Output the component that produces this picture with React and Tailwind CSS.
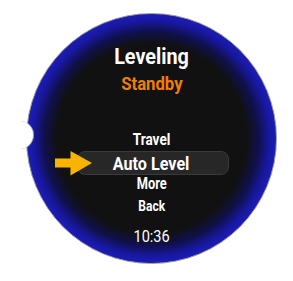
import React from 'react';

function Arrow() {
  return (
    <svg width="38" height="25" viewBox="0 0 38 25" className="absolute left-[-23px] top-[-1px]">
      <path d="M0 7.5 H15.5 V0 L37 12 L15.5 24.5 V16.5 H0 Z" fill="#f8b400" />
    </svg>
  );
}

export default function App() {
  return (
    <div className="w-[293px] h-[281px] bg-white pt-[13px] pl-[26px]" style={{ fontFamily: 'Roboto, "Liberation Sans", sans-serif' }}>
      <div className="relative w-[251px] h-[251px] rounded-full border-[1.5px] border-[#9c9c9c] bg-[image:radial-gradient(circle_closest-side,#111111_0%,#111111_76%,#10104c_86%,#1818a4_95%,#1c1cb4_100%)] flex flex-col items-center text-white">
        {/* notch on left edge */}
        <div className="absolute left-[-8px] top-[107px] w-[15px] h-[28px] rounded-r-full bg-white border-r-[1.5px] border-[#9c9c9c]"></div>

        <div className="mt-[32px] text-[22px] font-bold leading-none scale-x-[0.9]">Leveling</div>
        <div className="mt-[6px] text-[19px] font-bold leading-none text-[#f07f00] scale-x-[0.88]">Standby</div>

        <div className="mt-[38px] text-[17px] font-bold leading-none scale-x-[0.8]">Travel</div>
        <div className="relative mt-[3px] ml-[3px] w-[152px] h-[24px] rounded-[8px] bg-[#272727] border border-[#3a3a3a] flex items-center justify-center">
          <Arrow />
          <span className="text-[19px] font-bold leading-none scale-x-[0.85] ml-[-3px]">Auto Level</span>
        </div>
        <div className="mt-[1px] text-[16px] font-bold leading-none scale-x-[0.8]">More</div>
        <div className="mt-[7px] text-[15px] font-bold leading-none scale-x-[0.8]">Back</div>
        <div className="mt-[15px] text-[16.5px] leading-none scale-x-[0.88]">10:36</div>
      </div>
    </div>
  );
}
